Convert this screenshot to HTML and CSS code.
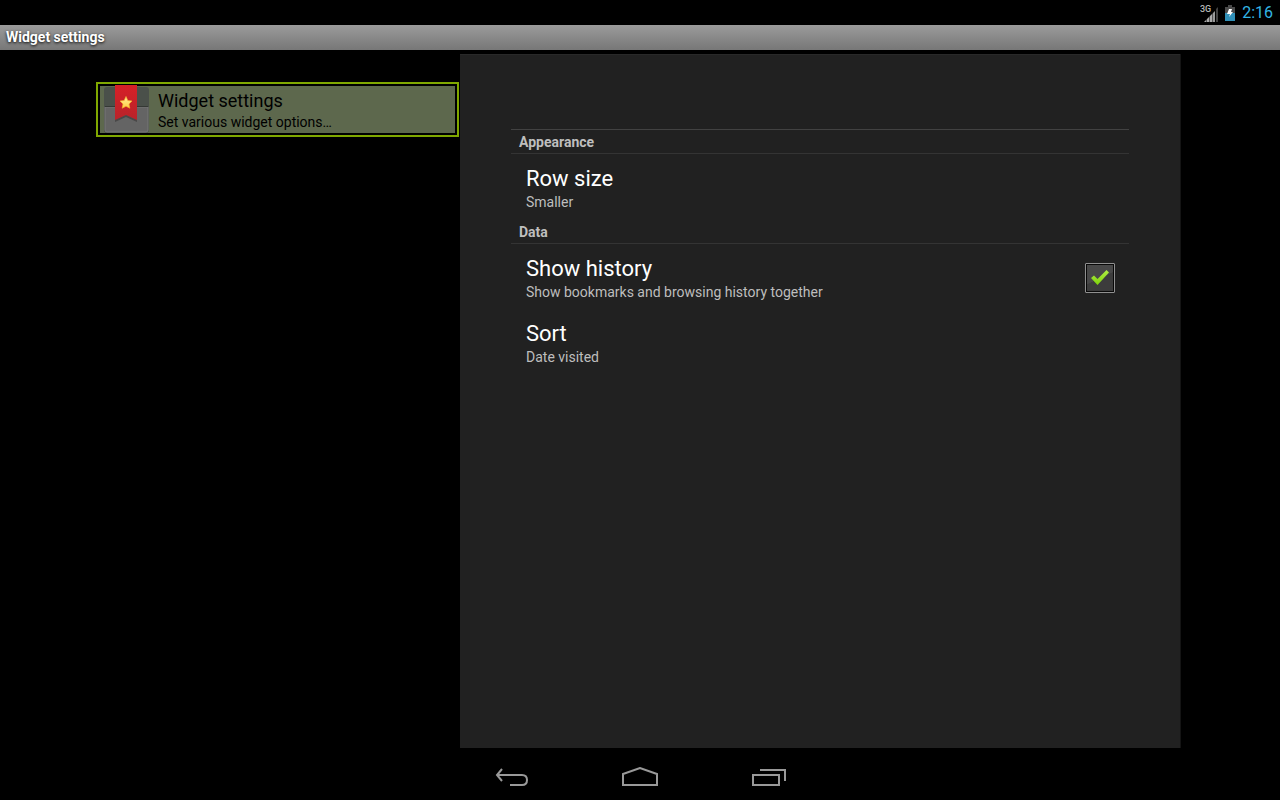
FILE: index.html
```html
<!DOCTYPE html>
<html lang="en">
<head>
<meta charset="utf-8">
<meta name="viewport" content="width=device-width, initial-scale=1">
<title>Widget settings</title>
<link rel="stylesheet" href="styles.css">
</head>
<body>
<div class="status-bar">
  <svg class="signal" width="20" height="19" viewBox="0 0 20 19" role="img" aria-label="Mobile signal">
    <text class="network" x="0" y="8">3G</text>
    <path d="M4 18L6 16V18Z" fill="#aaa"/>
    <path d="M7 18V15L9 13V18Z" fill="#aaa"/>
    <path d="M10 18V12L12 10V18Z" fill="#aaa"/>
    <path d="M13 18V9L15 7V18Z" fill="#999"/>
    <path d="M16 18V5L18 3V18Z" fill="#424242"/>
    <path d="M6 18V16L7 15V18ZM9 18V13L10 12V18ZM12 18V10L13 9V18Z" fill="#555"/>
  </svg>
  <svg class="battery" width="10" height="16" viewBox="0 0 10 16" role="img" aria-label="Battery charging">
    <path d="M3 0H7V2H10V16H0V2H3Z" fill="#4a4a4a"/>
    <path d="M0 8H10V16H0Z" fill="#3190b8"/>
    <path d="M4 4H7L6 7H8L4 12L5 9H2Z" fill="#fff"/>
  </svg>
  <time class="clock">2:16</time>
</div>
<header class="title-bar"><h1 class="title">Widget settings</h1></header>
<main class="content">
  <nav class="sidebar">
    <a class="entry" href="#settings">
      <svg class="entry-icon" width="48" height="48" viewBox="0 0 48 48" aria-hidden="true">
        <defs>
          <linearGradient id="ribbon" x1="0" x2="0" y1="0" y2="1"><stop offset="0" stop-color="#d62027"/><stop offset="1" stop-color="#b9232a"/></linearGradient>
          <linearGradient id="star" x1="0" x2="0" y1="0" y2="1"><stop offset="0" stop-color="#fff09a"/><stop offset="1" stop-color="#ffd044"/></linearGradient>
        </defs>
        <rect x="2" y="2" width="45" height="46" rx="3" fill="#4a504a"/>
        <path d="M3 22H46V45Q46 47 44 47H5Q3 47 3 45Z" fill="#646464" stroke="#777"/>
        <path d="M3 21.500H46" stroke="#343834"/>
        <path d="M13 1V37L24 32L35 37V1Z" fill="#302c2c" opacity=".5"/>
        <path d="M13 0H35V35L24 30L13 35Z" fill="url(#ribbon)"/>
        <path d="M24 11.500L25.800 15.500L30 16L27 19L27.800 23.200L24 21.200L20.200 23.200L21 19L18 16L22.200 15.500Z" fill="url(#star)" stroke="#f3ae28" stroke-width=".7"/>
      </svg>
      <span class="entry-text">
        <span class="entry-title">Widget settings</span>
        <span class="entry-summary">Set various widget options…</span>
      </span>
    </a>
  </nav>
  <section class="panel" id="settings">
    <div class="preferences">
      <h2 class="category">Appearance</h2>
      <button class="preference" type="button">
        <span class="name">Row size</span>
        <span class="summary">Smaller</span>
      </button>
      <h2 class="category">Data</h2>
      <label class="preference with-check" for="history">
        <span class="label-text">
          <span class="name">Show history</span>
          <span class="summary">Show bookmarks and browsing history together</span>
        </span>
        <span class="check">
          <input class="checkbox" type="checkbox" id="history" checked>
          <svg class="tick" width="20" height="16" viewBox="0 0 20 16" aria-hidden="true">
            <defs><linearGradient id="green" x1="0" x2="0" y1="0" y2="1"><stop offset="0" stop-color="#b0ee45"/><stop offset="1" stop-color="#7ed20a"/></linearGradient></defs>
            <path d="M1 8L4 5.500L7.500 9L16.500 0L19 2.500L7.500 15Z" fill="url(#green)"/>
          </svg>
        </span>
      </label>
      <button class="preference" type="button">
        <span class="name">Sort</span>
        <span class="summary">Date visited</span>
      </button>
    </div>
  </section>
</main>
<footer class="nav-bar">
  <button class="nav-button" type="button" aria-label="Back">
    <svg width="36" height="20" viewBox="0 0 36 20"><path d="M8 2L3 8L8 14M3 8H28Q33 8 33 13Q33 18 28 18H16"/></svg>
  </button>
  <button class="nav-button" type="button" aria-label="Home">
    <svg width="36" height="20" viewBox="0 0 36 20"><path d="M1 18V7L18 1L35 7V18Z"/></svg>
  </button>
  <button class="nav-button" type="button" aria-label="Recent apps">
    <svg width="36" height="20" viewBox="0 0 36 20"><path d="M3 8H29V18H3ZM10 3H35V14"/></svg>
  </button>
</footer>
</body>
</html>
```

FILE: styles.css
```css
* {
  box-sizing: border-box;
}

body {
  display: flex;
  flex-direction: column;
  min-height: 100vh;
  margin: 0;
  background: #000;
  color: #fff;
  font-family: Roboto, "Liberation Sans", sans-serif;
}

button {
  padding: 0;
  border: 0;
  background: none;
  color: inherit;
  font: inherit;
  text-align: left;
}

.status-bar {
  display: flex;
  align-items: center;
  justify-content: flex-end;
  height: 25px;
  padding: 0 7px 0 0;
}

.signal {
  margin-top: 2px;
}

.network {
  fill: #b5b5b5;
  font-size: 9px;
  font-weight: 500;
}

.battery {
  margin: 0 7px 0 5px;
}

.clock {
  color: #33b5e5;
  font-size: 16px;
  line-height: 25px;
}

.title-bar {
  padding: 0 6px;
  background: linear-gradient(#9b9b9b, #777);
}

.title {
  margin: 0;
  font-size: 14px;
  font-weight: 700;
  line-height: 25px;
  text-shadow: 0 1px 3px #000;
}

.content {
  display: grid;
  flex: 1;
  grid-template-columns: 364fr 720fr;
  padding: 4px 100px 0 96px;
}

.sidebar {
  padding: 28px 1px 0 0;
}

.entry {
  display: flex;
  gap: 8px;
  height: 55px;
  padding: 1px 2px;
  border: 2px solid #80a800;
  box-shadow: inset 0 0 0 2px #000;
  background: #5d684d;
  color: #000;
  text-decoration: none;
}

.entry-icon {
  margin-left: 2px;
}

.entry-text {
  padding-top: 4px;
}

.entry-title,
.entry-summary,
.name,
.summary {
  display: block;
}

.entry-title {
  font-size: 18px;
  line-height: 24px;
}

.entry-summary {
  font-size: 14px;
  line-height: 18px;
}

.panel {
  padding: 74px 51px 0;
  border-top: 1px solid #292929;
  background: #212121;
  box-shadow: 1px 0 0 #141414;
}

.category {
  margin: 0;
  padding: 1px 8px 0;
  border-top: 1px solid transparent;
  border-bottom: 1px solid #343434;
  color: #bebebe;
  font-size: 14px;
  font-weight: 700;
  line-height: 22px;
}

.category:first-child {
  border-top-color: #424242;
}

.preference {
  display: block;
  width: 100%;
  height: 65px;
  padding: 12px 14px 7px 15px;
}

.with-check {
  display: flex;
  align-items: flex-start;
  justify-content: space-between;
}

.name {
  font-size: 22px;
  line-height: 26px;
}

.summary {
  color: #bebebe;
  font-size: 14px;
  line-height: 20px;
}

.check {
  display: grid;
  place-items: center;
  padding-top: 7px;
}

.checkbox,
.tick {
  grid-area: 1 / 1;
}

.checkbox {
  width: 30px;
  height: 30px;
  margin: 0;
  border: 1px solid #909090;
  border-radius: 1px;
  appearance: none;
  background: linear-gradient(155deg, #484848 50%, #3c3c3c 51%);
  box-shadow: inset 0 0 0 1px #080808;
}

.tick {
  visibility: hidden;
  pointer-events: none;
}

.checkbox:checked + .tick {
  visibility: visible;
}

.nav-bar {
  display: flex;
  align-items: center;
  justify-content: center;
  gap: 92px;
  height: 52px;
  padding-top: 6px;
}

.nav-button {
  display: flex;
}

.nav-button svg {
  fill: none;
  stroke: #999;
  stroke-width: 2px;
}
```
